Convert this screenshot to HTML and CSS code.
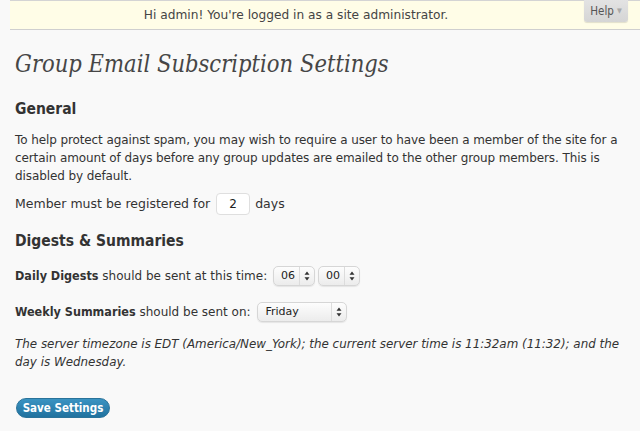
FILE: index.html
```html
<!DOCTYPE html>
<html>
<head>
<meta charset="utf-8">
<link rel="stylesheet" href="styles.css">
</head>
<body>
<div class="notice">
  <span class="notice-text">Hi admin! You're logged in as a site administrator.</span>
  <a class="help-tab">Help <span class="help-arrow">▼</span></a>
</div>
<div class="wrap">
  <h2 class="title">Group Email Subscription Settings</h2>
  <h3 class="section">General</h3>
  <p class="para">To help protect against spam, you may wish to require a user to have been a member of the site for a certain amount of days before any group updates are emailed to the other group members. This is disabled by default.</p>
  <p class="row row-first">Member must be registered for <span class="num-input">2</span> days</p>
  <h3 class="section section-2">Digests &amp; Summaries</h3>
  <p class="row row-daily"><b>Daily Digests</b> should be sent at this time: <span class="sel sel-sm">06<span class="arrows"><svg width="6" height="10" viewBox="0 0 6 10"><path d="M3 0.5 L5.5 3.8 H0.5Z M3 9.5 L5.5 6.2 H0.5Z" fill="#333"/></svg></span></span> <span class="sel sel-sm">00<span class="arrows"><svg width="6" height="10" viewBox="0 0 6 10"><path d="M3 0.5 L5.5 3.8 H0.5Z M3 9.5 L5.5 6.2 H0.5Z" fill="#333"/></svg></span></span></p>
  <p class="row row-weekly"><b>Weekly Summaries</b> should be sent on: <span class="sel sel-lg">Friday<span class="arrows"><svg width="6" height="10" viewBox="0 0 6 10"><path d="M3 0.5 L5.5 3.8 H0.5Z M3 9.5 L5.5 6.2 H0.5Z" fill="#333"/></svg></span></span></p>
  <p class="note">The server timezone is EDT (America/New_York); the current server time is 11:32am (11:32); and the day is Wednesday.</p>
  <div class="actions"><span class="btn">Save Settings</span></div>
</div>
</body>
</html>
```
FILE: styles.css
```css
html, body {
  margin: 0;
  padding: 0;
  background: #f9f9f9;
}
body {
  font-family: "DejaVu Sans", "Noto Sans", sans-serif;
  font-size: 12.5px;
  color: #333;
}
b {
  font-family: "DejaVu Sans Condensed", "DejaVu Sans", sans-serif;
  font-weight: bold;
  font-size: 12.5px;
}
.notice {
  margin-left: 10px;
  height: 28px;
  background: #fffde7;
  border-top: 1px solid #d4d4d4;
  border-bottom: 1px solid #cfcfcf;
  display: flex;
  align-items: center;
  position: relative;
}
.notice-text {
  flex: 1;
  text-align: center;
  padding-right: 58px;
  color: #444;
  font-size: 12.2px;
}
.help-tab {
  position: absolute;
  top: -1px;
  left: 574px;
  width: 44px;
  height: 22px;
  box-sizing: border-box;
  background: linear-gradient(#e3e3e3, #d5d5d5);
  border-radius: 0 0 3px 3px;
  box-shadow: 0 1px 1px rgba(0,0,0,0.12);
  font-family: "DejaVu Sans Condensed", "DejaVu Sans", sans-serif;
  font-size: 11.5px;
  color: #555;
  display: flex;
  align-items: center;
  justify-content: center;
  gap: 3px;
}
.help-arrow {
  font-size: 7px;
  color: #aaa;
}
.wrap {
  padding: 0 15px;
}
.title {
  font-family: "DejaVu Serif Condensed", "DejaVu Serif", Georgia, serif;
  font-style: italic;
  font-weight: normal;
  font-size: 23.5px;
  color: #464646;
  margin: 0;
  padding-top: 19px;
  height: 30px;
  line-height: 30px;
}
.section {
  font-family: "DejaVu Sans Condensed", "DejaVu Sans", sans-serif;
  font-size: 15.5px;
  font-weight: bold;
  margin: 20px 0 0;
  line-height: 20px;
  color: #333;
}
.section-2 {
  margin-top: 16px;
}
.para {
  margin: 12px 0 0;
  line-height: 18px;
  font-size: 12px;
  letter-spacing: -0.1px;
}
.row {
  margin: 0;
  line-height: 22px;
  display: flex;
  align-items: center;
  white-space: pre;
}
.row-first {
  margin-top: 8px;
}
.row-daily,
.row-weekly {
  margin-top: 14px;
  font-size: 12px;
}
.num-input {
  display: inline-flex;
  align-items: center;
  justify-content: center;
  width: 34px;
  height: 22px;
  box-sizing: border-box;
  background: #fff;
  border: 1px solid #dfdfdf;
  border-radius: 4px;
  margin: 0 1px 0 2px;
  color: #222;
  font-size: 12px;
}
.sel {
  display: inline-flex;
  align-items: center;
  height: 20px;
  box-sizing: border-box;
  background: linear-gradient(#fdfdfd, #ececec);
  border: 1px solid #d6d6d6;
  border-radius: 5px;
  box-shadow: 0 1px 1px rgba(0,0,0,0.08);
  font-size: 11px;
  color: #222;
  padding-left: 7px;
  position: relative;
}
.sel-sm {
  width: 42px;
  margin-left: 2px;
}
.sel-sm + .sel-sm {
  margin-left: 3px;
}
.sel-lg {
  width: 90px;
  margin-left: 3px;
}
.arrows {
  position: absolute;
  right: 0;
  top: 0;
  bottom: 0;
  width: 14px;
  border-left: 1px solid #dcdcdc;
  display: flex;
  align-items: center;
  justify-content: center;
}
.note {
  font-style: italic;
  margin: 12px 0 0;
  line-height: 18px;
  font-size: 11.9px;
}
.actions {
  margin-top: 27px;
}
.btn {
  display: inline-flex;
  align-items: center;
  justify-content: center;
  height: 20px;
  width: 94px;
  margin-left: 1px;
  box-sizing: border-box;
  border-radius: 11px;
  background: linear-gradient(#3a93c2, #21729f);
  border: 1px solid #2a739a;
  color: #fff;
  font-family: "DejaVu Sans Condensed", "DejaVu Sans", sans-serif;
  font-weight: bold;
  font-size: 11.5px;
}
```
